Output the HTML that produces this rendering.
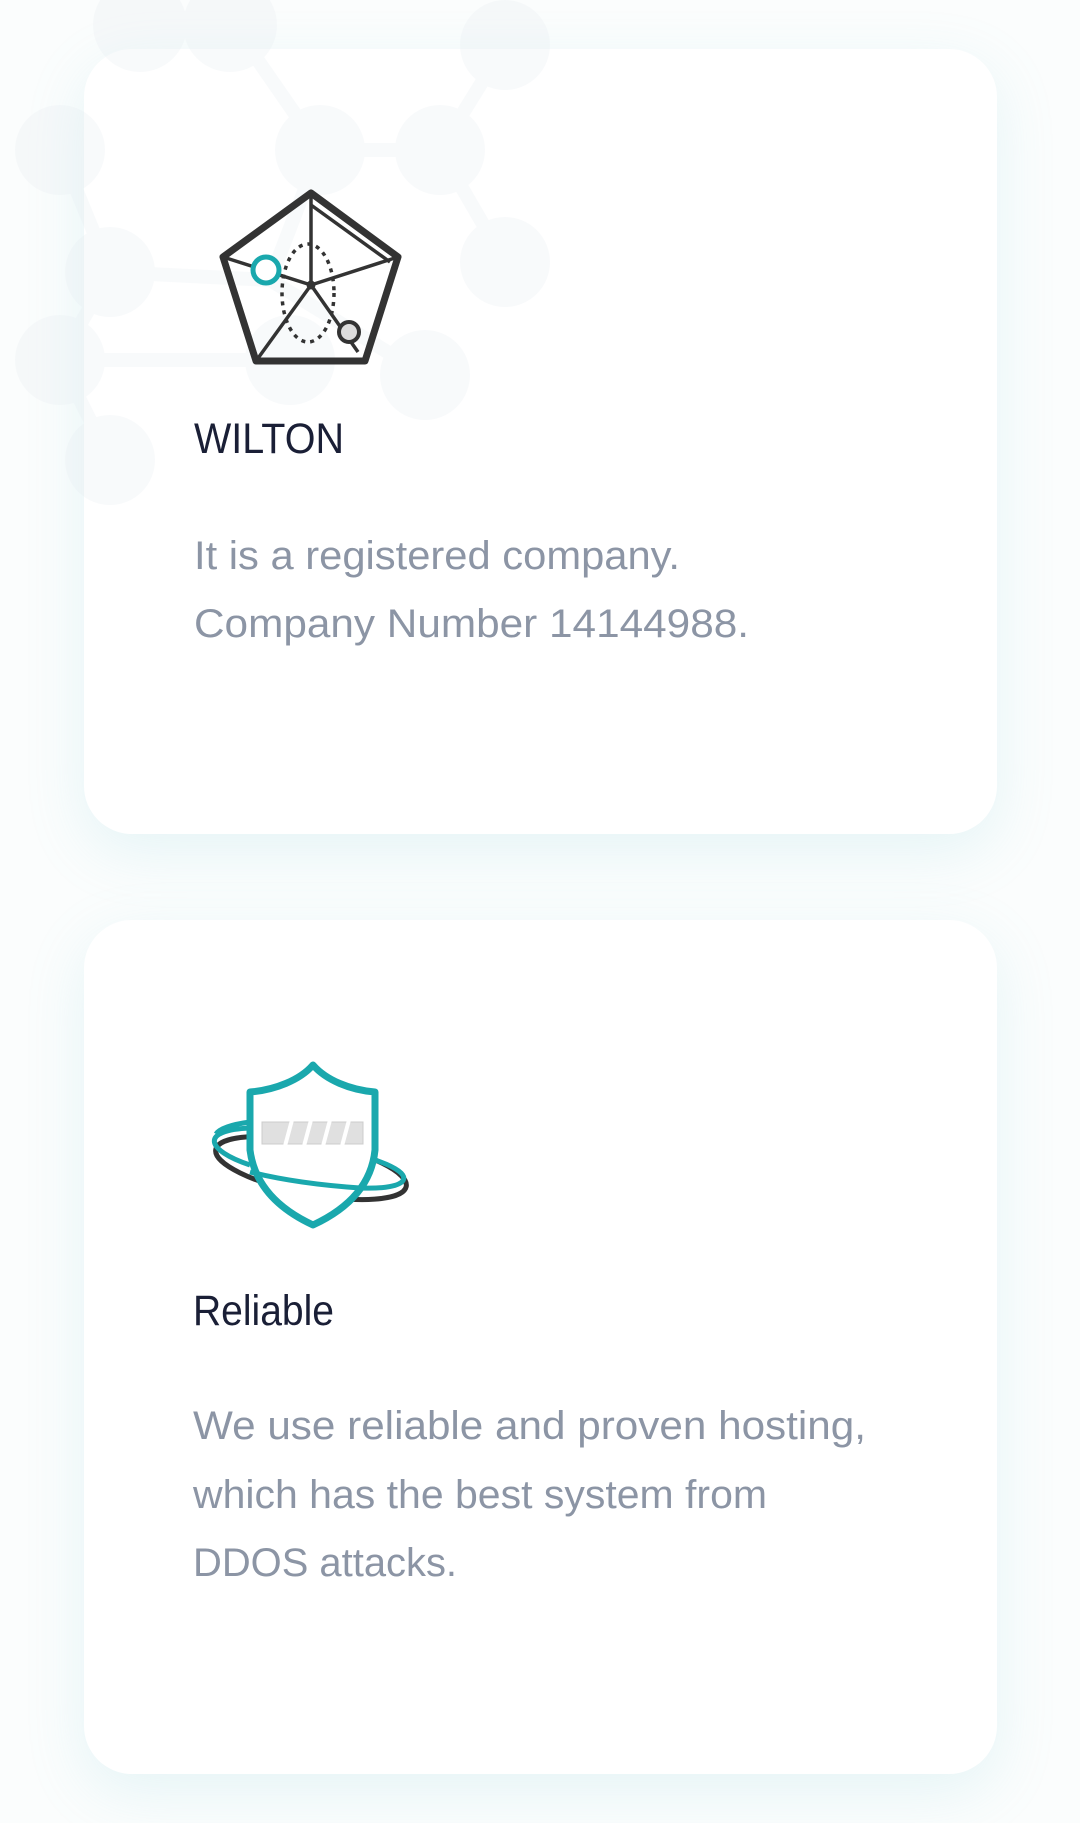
<!DOCTYPE html>
<html><head><meta charset="utf-8"><style>
html,body{margin:0;padding:0;background:#fff;}
body{width:1080px;height:1823px;position:relative;overflow:hidden;background:#fbfdfd;}
.card{position:absolute;left:84px;width:913px;background:#fff;border-radius:48px;box-shadow:0 18px 60px rgba(120,200,210,0.16);}
svg{position:absolute;left:0;top:0;}
</style></head><body>
<div class="card" style="top:49px;height:785px;"></div>
<div class="card" style="top:920px;height:854px;"></div>
<svg width="1080" height="1823" style="z-index:1">
<g fill="#e4eaef" stroke="#e4eaef" stroke-width="14" opacity="0.22">
<line x1="140" y1="20" x2="230" y2="20"/><line x1="230" y1="20" x2="320" y2="150"/><line x1="320" y1="150" x2="440" y2="150"/><line x1="440" y1="150" x2="505" y2="45"/><line x1="440" y1="150" x2="505" y2="262"/><line x1="320" y1="150" x2="270" y2="280"/><line x1="60" y1="150" x2="110" y2="272"/><line x1="110" y1="272" x2="60" y2="360"/><line x1="60" y1="360" x2="110" y2="460"/><line x1="110" y1="272" x2="270" y2="280"/><line x1="270" y1="280" x2="425" y2="375"/><line x1="60" y1="360" x2="290" y2="360"/>
<circle cx="140" cy="25" r="40"/><circle cx="230" cy="25" r="40"/><circle cx="505" cy="45" r="38"/><circle cx="320" cy="150" r="38"/><circle cx="440" cy="150" r="38"/><circle cx="505" cy="262" r="38"/><circle cx="60" cy="150" r="38"/><circle cx="110" cy="272" r="38"/><circle cx="60" cy="360" r="38"/><circle cx="110" cy="460" r="38"/><circle cx="425" cy="375" r="38"/><circle cx="290" cy="360" r="38"/>
</g></svg>
<svg width="1080" height="1823" style="z-index:2" font-family="Liberation Sans, sans-serif">
<g stroke="#333" fill="none" stroke-linejoin="round">
<polygon points="311,193 398,257 365,361 256,361 223,257" stroke-width="7"/>
<g stroke-width="3.5">
<line x1="311" y1="285" x2="311" y2="193"/><line x1="311" y1="285" x2="398" y2="257"/><line x1="311" y1="285" x2="256" y2="361"/><line x1="311" y1="285" x2="223" y2="257"/><line x1="311" y1="285" x2="358" y2="352"/><line x1="311" y1="205" x2="390" y2="262"/>
</g>
<ellipse cx="308" cy="293" rx="26" ry="49" stroke-width="3.5" stroke-dasharray="4 5"/>
<circle cx="311" cy="285" r="4" fill="#333"/>
<circle cx="266" cy="270" r="13" stroke="#1aa8ad" stroke-width="5" fill="#fff"/>
<circle cx="349" cy="332" r="10" stroke-width="4" fill="#ddd"/>
</g>
<text x="194" y="453" font-size="43" fill="#1a1f36" textLength="150" lengthAdjust="spacingAndGlyphs">WILTON</text>
<g font-size="40" fill="#8c95a5">
<text x="194" y="569" textLength="486" lengthAdjust="spacingAndGlyphs">It is a registered company.</text>
<text x="194" y="637" textLength="555" lengthAdjust="spacingAndGlyphs">Company Number 14144988.</text>
</g>
<ellipse cx="311" cy="1168" rx="97" ry="26" transform="rotate(11 311 1168)" fill="none" stroke="#333" stroke-width="5"/>
<path d="M313,1065 C300,1080 275,1090 250,1092 L250,1150 C255,1190 285,1212 313,1225 C341,1212 371,1190 375,1150 L375,1092 C350,1090 326,1080 313,1065 Z" fill="#fff" stroke="#1aa8ad" stroke-width="7" stroke-linejoin="round"/>
<rect x="262" y="1122" width="101" height="22" fill="#e0e0e0" stroke="#ccc"/>
<g stroke="#fff" stroke-width="4"><line x1="285" y1="1146" x2="292" y2="1120"/><line x1="304" y1="1146" x2="311" y2="1120"/><line x1="323" y1="1146" x2="330" y2="1120"/><line x1="342" y1="1146" x2="349" y2="1120"/></g>
<path d="M250,1128 C200,1130 205,1150 250,1165 M375,1160 C420,1175 410,1190 360,1188 C330,1186 290,1182 250,1172" fill="none" stroke="#1aa8ad" stroke-width="5"/>
<path d="M250,1122 C235,1124 220,1128 216,1134" fill="none" stroke="#1aa8ad" stroke-width="5"/>
<text x="193" y="1325" font-size="43" fill="#1a1f36" textLength="141" lengthAdjust="spacingAndGlyphs">Reliable</text>
<g font-size="40" fill="#8c95a5">
<text x="193" y="1439" textLength="673" lengthAdjust="spacingAndGlyphs">We use reliable and proven hosting,</text>
<text x="193" y="1508" textLength="574" lengthAdjust="spacingAndGlyphs">which has the best system from</text>
<text x="193" y="1576" textLength="264" lengthAdjust="spacingAndGlyphs">DDOS attacks.</text>
</g>
</svg>
</body></html>
